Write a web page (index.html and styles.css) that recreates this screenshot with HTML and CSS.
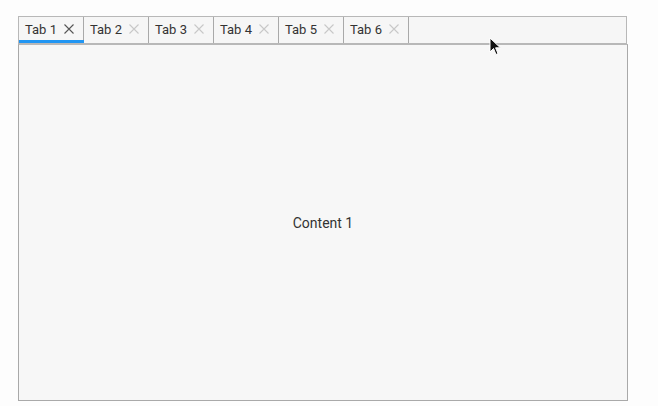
FILE: index.html
```html
<!DOCTYPE html>
<html>
<head>
<meta charset="utf-8">
<link rel="stylesheet" href="styles.css">
</head>
<body>
<div class="tabs">
  <div class="tabbar">
    <div class="tab active"><span>Tab 1</span><svg class="close" viewBox="0 0 10 10"><path d="M0.5 0.5 L9.5 9.5 M9.5 0.5 L0.5 9.5"/></svg></div>
    <div class="tab"><span>Tab 2</span><svg class="close" viewBox="0 0 10 10"><path d="M0.5 0.5 L9.5 9.5 M9.5 0.5 L0.5 9.5"/></svg></div>
    <div class="tab"><span>Tab 3</span><svg class="close" viewBox="0 0 10 10"><path d="M0.5 0.5 L9.5 9.5 M9.5 0.5 L0.5 9.5"/></svg></div>
    <div class="tab"><span>Tab 4</span><svg class="close" viewBox="0 0 10 10"><path d="M0.5 0.5 L9.5 9.5 M9.5 0.5 L0.5 9.5"/></svg></div>
    <div class="tab"><span>Tab 5</span><svg class="close" viewBox="0 0 10 10"><path d="M0.5 0.5 L9.5 9.5 M9.5 0.5 L0.5 9.5"/></svg></div>
    <div class="tab"><span>Tab 6</span><svg class="close" viewBox="0 0 10 10"><path d="M0.5 0.5 L9.5 9.5 M9.5 0.5 L0.5 9.5"/></svg></div>
  </div>
  <div class="content">Content 1</div>
</div>
<svg class="cursor" width="13" height="20" viewBox="0 0 13 20"><path d="M1 1 L1 15 L4.5 11.5 L7 17.5 L9 16.6 L6.6 10.8 L11.4 10.8 Z" fill="#111" stroke="#fff" stroke-width="1"/></svg>
</body>
</html>
```
FILE: styles.css
```css
html, body { margin: 0; padding: 0; }
body {
  background: #fdfdfd;
  font-family: Roboto, "Liberation Sans", sans-serif;
  color: #333;
  width: 658px;
  height: 406px;
  position: relative;
  overflow: hidden;
}
.tabs {
  margin: 16px 0 0 18px;
  width: 610px;
  display: flex;
  flex-direction: column;
}
.tabbar {
  width: 607px;
  height: 26px;
  border: 1px solid #b8b8b8;
  background: #f6f6f6;
  display: flex;
}
.tab {
  position: relative;
  border-right: 1px solid #a9a9a9;
  display: flex;
  align-items: center;
  padding-left: 6px;
  padding-bottom: 2px;
  box-sizing: border-box;
  width: 65px;
  font-size: 13px;
  gap: 7px;
}
.close {
  width: 10px;
  height: 10px;
  fill: none;
  stroke: #c8c8c8;
  stroke-width: 1.1;
}
.tab.active .close { stroke: #555; }
.tab.active::after {
  content: "";
  position: absolute;
  left: 0;
  right: -1px;
  bottom: 0;
  height: 3px;
  background: #2196f3;
}
.content {
  height: 355px;
  border: 1px solid #a9a9a9;
  border-top: 1px solid #b8b8b8;
  background: #f7f7f7;
  display: flex;
  align-items: center;
  justify-content: center;
  font-size: 14px;
  color: #333;
}
.cursor {
  position: absolute;
  left: 489px;
  top: 37px;
}
```
